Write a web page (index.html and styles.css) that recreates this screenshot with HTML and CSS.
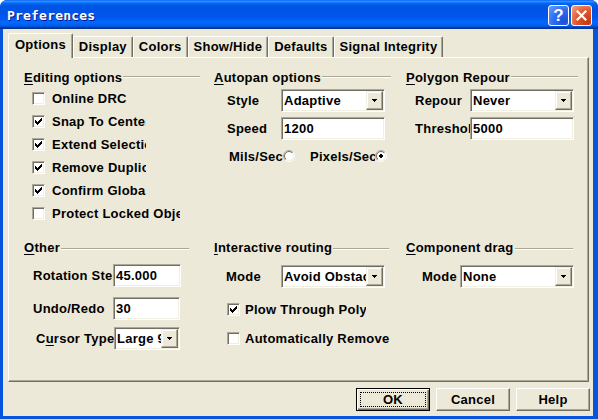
FILE: index.html
```html
<!DOCTYPE html>
<html>
<head>
<meta charset="utf-8">
<link rel="stylesheet" href="styles.css">
</head>
<body>
<div class="window">
  <div class="titlebar">
    <span class="title">Preferences</span>
    <span class="tb-btn help">?</span>
    <span class="tb-btn close"><svg width="11" height="11" viewBox="0 0 11 11"><path d="M1.5 1.5 L9.5 9.5 M9.5 1.5 L1.5 9.5" stroke="#fff" stroke-width="2.2" stroke-linecap="square"/></svg></span>
  </div>
  <div class="client">
    <div class="tabs">
      <span class="tab active">Options</span>
      <span class="tab">Display</span>
      <span class="tab">Colors</span>
      <span class="tab">Show/Hide</span>
      <span class="tab">Defaults</span>
      <span class="tab">Signal Integrity</span>
    </div>
    <div class="panel">
      <div class="groups">
        <section class="group">
          <div class="head w176"><span><u>E</u>diting options</span><i class="line"></i></div>
          <div class="checks">
            <div class="check"><span class="box"></span><span class="cb-text">Online DRC</span></div>
            <div class="check"><span class="box on"><svg width="7" height="7" viewBox="0 0 7 7"><path d="M0 2h1v3H0z M1 3h1v3H1z M2 4h1v3H2z M3 3h1v3H3z M4 2h1v3H4z M5 1h1v3H5z M6 0h1v3H6z"/></svg></span><span class="cb-text">Snap To Center</span></div>
            <div class="check"><span class="box on"><svg width="7" height="7" viewBox="0 0 7 7"><path d="M0 2h1v3H0z M1 3h1v3H1z M2 4h1v3H2z M3 3h1v3H3z M4 2h1v3H4z M5 1h1v3H5z M6 0h1v3H6z"/></svg></span><span class="cb-text">Extend Selection</span></div>
            <div class="check"><span class="box on"><svg width="7" height="7" viewBox="0 0 7 7"><path d="M0 2h1v3H0z M1 3h1v3H1z M2 4h1v3H2z M3 3h1v3H3z M4 2h1v3H4z M5 1h1v3H5z M6 0h1v3H6z"/></svg></span><span class="cb-text">Remove Duplicates</span></div>
            <div class="check"><span class="box on"><svg width="7" height="7" viewBox="0 0 7 7"><path d="M0 2h1v3H0z M1 3h1v3H1z M2 4h1v3H2z M3 3h1v3H3z M4 2h1v3H4z M5 1h1v3H5z M6 0h1v3H6z"/></svg></span><span class="cb-text">Confirm Global Edit</span></div>
            <div class="check"><span class="box"></span><span class="cb-text wide">Protect Locked Objects</span></div>
          </div>
        </section>

        <section class="group">
          <div class="head w177"><span><u>A</u>utopan options</span><i class="line"></i></div>
          <div class="field f-first pl13"><span class="lbl w54">Style</span><span class="select w104"><span class="val">Adaptive</span><span class="drop"><svg width="5" height="3" viewBox="0 0 5 3"><path d="M0 0h5v1H0z M1 1h3v1H1z M2 2h1v1H2z"/></svg></span></span></div>
          <div class="field f-next pl13"><span class="lbl w54">Speed</span><span class="input w104">1200</span></div>
          <div class="radios">
            <span class="lbl w54">Mils/Sec</span>
            <svg class="radio" width="12" height="12" viewBox="0 0 12 12"><defs><linearGradient id="rg1" x1="0" y1="0" x2="1" y2="1"><stop offset="0.5" stop-color="#ACA899"/><stop offset="0.5" stop-color="#FFFFFF"/></linearGradient><linearGradient id="rg2" x1="0" y1="0" x2="1" y2="1"><stop offset="0.5" stop-color="#716F64"/><stop offset="0.5" stop-color="#F1EFE2"/></linearGradient></defs><circle cx="6" cy="6" r="5.5" fill="none" stroke="url(#rg1)"/><circle cx="6" cy="6" r="4.5" fill="#fff" stroke="url(#rg2)"/></svg>
            <span class="lbl w65 gap15">Pixels/Sec</span>
            <svg class="radio" width="12" height="12" viewBox="0 0 12 12"><circle cx="6" cy="6" r="5.5" fill="none" stroke="url(#rg1)"/><circle cx="6" cy="6" r="4.5" fill="#fff" stroke="url(#rg2)"/><rect x="4" y="5" width="4" height="2"/><rect x="5" y="4" width="2" height="4"/></svg>
          </div>
        </section>

        <section class="group">
          <div class="head w172"><span><u>P</u>olygon Repour</span><i class="line"></i></div>
          <div class="field f-first pl9"><span class="lbl w55">Repour</span><span class="select w104"><span class="val">Never</span><span class="drop"><svg width="5" height="3" viewBox="0 0 5 3"><path d="M0 0h5v1H0z M1 1h3v1H1z M2 2h1v1H2z"/></svg></span></span></div>
          <div class="field f-next pl9"><span class="lbl w55">Threshold</span><span class="input w104">5000</span></div>
        </section>

        <section class="group">
          <div class="head w165 row2"><span><u>O</u>ther</span><i class="line"></i></div>
          <div class="field f-r2 pl9"><span class="lbl w80">Rotation Step</span><span class="input w68">45.000</span></div>
          <div class="field f-gap10 pl9"><span class="lbl w80">Undo/Redo</span><span class="input w67">30</span></div>
          <div class="field f-gap7 pl12"><span class="lbl w78">C<u>u</u>rsor Type</span><span class="select w66"><span class="val">Large 90</span><span class="drop"><svg width="5" height="3" viewBox="0 0 5 3"><path d="M0 0h5v1H0z M1 1h3v1H1z M2 2h1v1H2z"/></svg></span></span></div>
        </section>

        <section class="group">
          <div class="head w175 row2"><span><u>I</u>nteractive routing</span><i class="line"></i></div>
          <div class="field f-r2b pl12"><span class="lbl w55">Mode</span><span class="select w104"><span class="val">Avoid Obstacle</span><span class="drop"><svg width="5" height="3" viewBox="0 0 5 3"><path d="M0 0h5v1H0z M1 1h3v1H1z M2 2h1v1H2z"/></svg></span></span></div>
          <div class="check c2 first"><span class="box on"><svg width="7" height="7" viewBox="0 0 7 7"><path d="M0 2h1v3H0z M1 3h1v3H1z M2 4h1v3H2z M3 3h1v3H3z M4 2h1v3H4z M5 1h1v3H5z M6 0h1v3H6z"/></svg></span><span class="cb-text w121">Plow Through Polygons</span></div>
          <div class="check c2 second"><span class="box"></span><span class="cb-text free">Automatically Remove</span></div>
        </section>

        <section class="group">
          <div class="head w167 row2"><span><u>C</u>omponent drag</span><i class="line"></i></div>
          <div class="field f-r2b pl16"><span class="lbl w38">Mode</span><span class="select w114"><span class="val">None</span><span class="drop"><svg width="5" height="3" viewBox="0 0 5 3"><path d="M0 0h5v1H0z M1 1h3v1H1z M2 2h1v1H2z"/></svg></span></span></div>
        </section>
      </div>
    </div>
    <div class="buttons">
      <span class="btn default"><span class="focus">OK</span></span>
      <span class="btn">Cancel</span>
      <span class="btn">Help</span>
    </div>
  </div>
</div>
</body>
</html>
```

FILE: styles.css
```css
* { box-sizing: border-box; }
html, body { margin: 0; padding: 0; }
body {
  width: 598px;
  height: 419px;
  overflow: hidden;
  background: #ffffff;
  font: bold 13px "Liberation Sans", Arial, sans-serif;
  letter-spacing: 0.25px;
  color: #000;
}
u { text-decoration: underline; text-underline-offset: 2px; }

.window {
  width: 598px;
  height: 419px;
  display: flex;
  flex-direction: column;
  background: #0855DD;
  border-radius: 7px 7px 0 0;
  overflow: hidden;
}

.titlebar {
  height: 29px;
  flex: none;
  display: flex;
  align-items: flex-start;
  padding: 5px 6px 0 7px;
  gap: 2px;
  background: linear-gradient(to bottom, #0058EE 0%, #3A93FF 4%, #288EFF 6%, #127DFF 8%, #036FFC 10%, #0262EE 14%, #0057E5 20%, #0054E3 24%, #0055EB 56%, #005BF5 66%, #026AFE 76%, #0062EF 86%, #0052D6 92%, #0040AB 94%, #003092 100%);
}
.title {
  flex: 1;
  font: bold 13px "DejaVu Sans Mono", "Liberation Mono", monospace;
  line-height: 21px;
  color: #fff;
  text-shadow: 1px 1px 0 #0A1A8C;
  letter-spacing: 0.2px;
}
.tb-btn {
  width: 21px;
  height: 21px;
  border: 1px solid #fff;
  border-radius: 3px;
  display: flex;
  align-items: center;
  justify-content: center;
}
.help {
  background: radial-gradient(circle at 80% 80%, #1C4FD8 0%, #2D6CF2 50%, #6DA0FF 100%);
  color: #fff;
  font: bold 17px "Liberation Sans", Arial, sans-serif;
  line-height: 19px;
  letter-spacing: 0;
}
.close {
  background: radial-gradient(circle at 85% 85%, #C23A10 0%, #E0552B 50%, #F3A68F 100%);
}

.client {
  flex: 1;
  margin: 0 5px 3px 3px;
  background: #ECE9D8;
  padding: 4px 4px 0 5px;
  display: flex;
  flex-direction: column;
}

.tabs {
  display: flex;
  align-items: flex-end;
  height: 24px;
  flex: none;
}
.tab {
  height: 21px;
  padding: 0 5px;
  line-height: 20px;
  border: 1px solid;
  border-bottom: none;
  border-color: #fff #716F64 transparent #fff;
  box-shadow: inset -1px 0 0 #ACA899;
  border-radius: 2px 2px 0 0;
  background: #ECE9D8;
  white-space: nowrap;
}
.tab.active {
  height: 25px;
  padding: 1px 6px 0 6px;
  margin-bottom: -1px;
  position: relative;
  z-index: 1;
}

.panel {
  height: 325px;
  flex: none;
  border: 1px solid;
  border-color: #fff #716F64 #716F64 #fff;
  box-shadow: inset -1px -1px 0 #ACA899;
  background: #ECE9D8;
}

.groups {
  display: grid;
  grid-template-columns: 190px 192px 172px;
  grid-template-rows: 170px auto;
  padding: 12px 0 0 15px;
}
.group { display: flex; flex-direction: column; }

.head {
  display: flex;
  align-items: flex-start;
  height: 15px;
  line-height: 15px;
  white-space: nowrap;
}
.head .line {
  flex: 1;
  height: 2px;
  margin: 6px 0 0 1px;
  border-top: 1px solid #ACA899;
  border-bottom: 1px solid #fff;
}
.head.row2 .line { margin-top: 8px; }
.w176 { width: 176px; }
.w177 { width: 177px; }
.w172 { width: 172px; }
.w165 { width: 165px; }
.w175 { width: 175px; }
.w167 { width: 167px; }

.checks { margin-top: 2px; display: flex; flex-direction: column; }
.check {
  display: flex;
  align-items: center;
  height: 23px;
  padding-left: 8px;
  gap: 7px;
}
.box {
  width: 13px;
  height: 13px;
  flex: none;
  background: #fff;
  border: 1px solid;
  border-color: #ACA899 #fff #fff #ACA899;
  box-shadow: inset 1px 1px 0 #716F64, inset -1px -1px 0 #F1EFE2;
  display: flex;
  align-items: center;
  justify-content: center;
}
.box svg { display: block; }
.cb-text { width: 94px; overflow: hidden; white-space: nowrap; line-height: 16px; }
.cb-text.wide { width: 128px; }
.cb-text.w121 { width: 121px; }
.cb-text.free { width: auto; overflow: visible; }

.check.c2 { padding-left: 13px; gap: 5px; }
.check.c2.first { margin-top: 10px; }
.check.c2.second { margin-top: 6px; }

.field { display: flex; align-items: center; height: 23px; }
.f-first { margin-top: 4px; }
.f-next { margin-top: 5px; }
.f-r2 { margin-top: 9px; }
.f-r2b { margin-top: 10px; }
.f-gap10 { margin-top: 10px; }
.f-gap7 { margin-top: 7px; }
.pl9 { padding-left: 9px; }
.pl12 { padding-left: 12px; }
.pl13 { padding-left: 13px; }
.pl16 { padding-left: 16px; }

.lbl { flex: none; overflow: hidden; white-space: nowrap; }
.w38 { width: 38px; }
.w54 { width: 54px; }
.w55 { width: 55px; }
.w65 { width: 65px; }
.w78 { width: 78px; }
.w80 { width: 80px; }
.w66 { width: 66px; }
.w67 { width: 67px; }
.w68 { width: 68px; }
.w104 { width: 104px; }
.w114 { width: 114px; }

.input, .select {
  height: 23px;
  flex: none;
  background: #fff;
  border: 1px solid;
  border-color: #ACA899 #fff #fff #ACA899;
  box-shadow: inset 1px 1px 0 #716F64, inset -1px -1px 0 #F1EFE2;
  white-space: nowrap;
  overflow: hidden;
  line-height: 21px;
}
.input { padding-left: 2px; }
.select { display: flex; align-items: stretch; padding: 1px; }
.select .val { flex: 1; overflow: hidden; padding-left: 1px; line-height: 19px; }
.drop {
  width: 17px;
  flex: none;
  background: #ECE9D8;
  border: 1px solid;
  border-color: #F1EFE2 #716F64 #716F64 #F1EFE2;
  box-shadow: inset -1px -1px 0 #ACA899, inset 1px 1px 0 #fff;
  display: flex;
  align-items: center;
  justify-content: center;
}
.drop svg { display: block; }

.radios {
  display: flex;
  align-items: center;
  height: 22px;
  margin-top: 5px;
  padding-left: 15px;
}
.radio { flex: none; display: block; }
.gap15 { margin-left: 15px; }

.buttons {
  display: flex;
  justify-content: flex-end;
  gap: 6px;
  margin: 6px -1px 0 0;
}
.btn {
  width: 74px;
  height: 23px;
  display: flex;
  align-items: center;
  justify-content: center;
  background: #ECE9D8;
  border: 1px solid;
  border-color: #fff #716F64 #716F64 #fff;
  box-shadow: inset -1px -1px 0 #ACA899;
}
.btn.default {
  border: 1px solid #000;
  box-shadow: inset 1px 1px 0 #fff, inset -1px -1px 0 #716F64, inset -2px -2px 0 #ACA899;
  padding: 3px;
}
.btn .focus {
  width: 100%;
  height: 100%;
  border: 1px dotted #000;
  display: flex;
  align-items: center;
  justify-content: center;
}
```
